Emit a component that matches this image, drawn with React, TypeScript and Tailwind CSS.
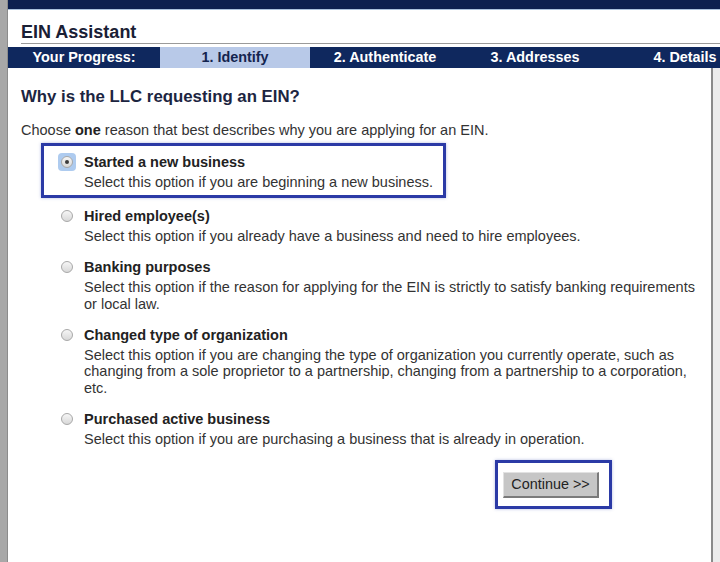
const steps = ["1. Identify", "2. Authenticate", "3. Addresses", "4. Details"];

const reasons = [
  {
    title: "Started a new business",
    desc: "Select this option if you are beginning a new business.",
    selected: true,
  },
  {
    title: "Hired employee(s)",
    desc: "Select this option if you already have a business and need to hire employees.",
  },
  {
    title: "Banking purposes",
    desc: "Select this option if the reason for applying for the EIN is strictly to satisfy banking requirements or local law.",
  },
  {
    title: "Changed type of organization",
    desc: "Select this option if you are changing the type of organization you currently operate, such as changing from a sole proprietor to a partnership, changing from a partnership to a corporation, etc.",
  },
  {
    title: "Purchased active business",
    desc: "Select this option if you are purchasing a business that is already in operation.",
  },
];

function Radio({ checked }: { checked?: boolean }) {
  return (
    <span className="relative mt-[2px] flex h-[12px] w-[12px] shrink-0">
      {checked && <span className="absolute -inset-[3px] rounded-[4px] bg-[#aecbef]" />}
      <span className="relative flex h-[12px] w-[12px] items-center justify-center rounded-full border border-[#a8a8a8] bg-gradient-to-b from-[#f6f6f6] to-[#d8d8d8]">
        {checked && <span className="h-[4px] w-[4px] rounded-full bg-[#3a3a3a]" />}
      </span>
    </span>
  );
}

function Reason({ title, desc, selected }: { title: string; desc: string; selected?: boolean }) {
  return (
    <div className="flex gap-[11px]">
      <Radio checked={selected} />
      <div>
        <div className="font-bold text-[#222]">{title}</div>
        <div className="mt-[3.5px] max-w-[618px] text-[#333]">{desc}</div>
      </div>
    </div>
  );
}

export default function App() {
  return (
    <div className="flex h-[562px] w-[720px] overflow-hidden bg-white font-['Liberation_Sans',Arial,sans-serif] text-[14.5px] leading-[16.5px]">
      {/* window edge */}
      <div className="w-[8px] shrink-0 border-r border-[#8c8c8c] bg-[#a8a8a8]" />

      <div className="flex min-w-0 flex-1 flex-col">
        <div className="h-[9px] bg-[#0c1f4f]" />
        <div className="h-[1px] bg-[#a9c0dc]" />

        {/* Header */}
        <div className="ml-[13px] border-b border-[#9a9a9a] pt-[12px] text-[18px] leading-[20.7px] font-bold text-[#1a2035]">
          EIN Assistant
        </div>

        {/* Progress bar */}
        <div className="mt-[3px] flex h-[21px] shrink-0 items-center bg-[#0f285e] text-[14.4px] font-bold text-white whitespace-nowrap">
          <div className="flex h-full w-[152px] shrink-0 items-center justify-center">Your Progress:</div>
          {steps.map((s, i) => (
            <div
              key={s}
              className={
                i === 0
                  ? "flex h-full w-[150px] shrink-0 items-center justify-center bg-[#b8c9e8] font-bold text-[#14244f]"
                  : "flex h-full w-[150px] shrink-0 items-center justify-center"
              }
            >
              {s}
            </div>
          ))}
        </div>

        <div className="flex min-h-0 flex-1">
          <div className="flex-1 pl-[13px] pt-[19px]">
            <h2 className="text-[16.8px] leading-[19.3px] font-bold text-[#1c2541]">
              Why is the LLC requesting an EIN?
            </h2>
            <p className="mt-[16px] text-[#333]">
              Choose <b className="text-[#222]">one</b> reason that best describes why you are applying for an EIN.
            </p>

            <div className="mt-[4px] flex flex-col">
              <div className="ml-[20px] w-fit border-[3px] border-[#2b3aa6] pt-[8px] pb-[5px] pl-[17px] pr-[10px] shadow-[0_0_3px_rgba(40,60,170,0.35)]">
                <Reason {...reasons[0]} />
              </div>
              <div className="mt-[10px] ml-[40px] flex flex-col gap-[14.5px]">
                {reasons.slice(1).map((r) => (
                  <Reason key={r.title} {...r} />
                ))}
              </div>
            </div>

            <div className="mt-[13px] ml-[474px] w-fit border-[3px] border-[#2b3aa6] pt-[9px] pb-[8px] pl-[5px] pr-[10px] shadow-[0_0_3px_rgba(40,60,170,0.35)]">
              <button className="flex h-[26px] w-[96px] items-center justify-center border border-r-2 border-b-2 border-t-[#e2e2e2] border-l-[#e2e2e2] border-r-[#7a7a7a] border-b-[#7a7a7a] bg-[#c6c6c6] text-[14.4px] text-[#222]">
                Continue &gt;&gt;
              </button>
            </div>
          </div>

          {/* scroll edge */}
          <div className="w-[9px] shrink-0 border-l-2 border-[#8a8a8a] bg-[#ececec]" />
        </div>
      </div>
    </div>
  );
}
